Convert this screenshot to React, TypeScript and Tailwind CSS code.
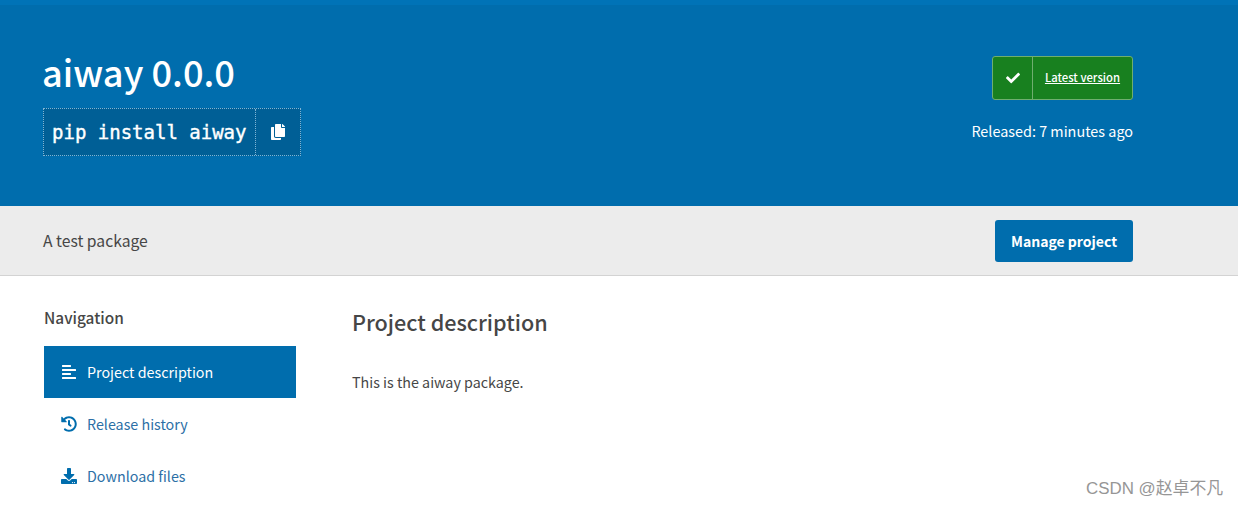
import React from "react";
import { FaAlignLeft, FaCheck, FaCopy, FaDownload, FaHistory } from "react-icons/fa";

const sans = "font-['Noto_Sans_CJK_SC','Source_Sans_Pro',sans-serif]";

const navItems = [
  { label: "Project description", icon: FaAlignLeft, active: true },
  { label: "Release history", icon: FaHistory, active: false },
  { label: "Download files", icon: FaDownload, active: false },
];

const App = () => {
  return (
    <div className={`relative w-[1238px] h-[507px] overflow-hidden bg-white text-[#464646] ${sans}`}>
      <header className="h-[206px] bg-[#006dad] border-t-[5px] border-[#0073b7] px-[43px] pt-[43px] text-white">
        <div className="flex justify-between w-[1090px]">
          <div>
            <h1 className="text-[36.2px] leading-[46px] font-medium -ml-[1px]">aiway 0.0.0</h1>
            <div className="mt-[14px] flex w-[258px] h-[48px] items-stretch border border-dotted border-[#7fb4d4] bg-[#005f96]">
              <span className="flex-1 flex items-center pl-[8px] font-['DejaVu_Sans_Mono',monospace] text-[19px] [-webkit-text-stroke:0.4px_white]">
                pip install aiway
              </span>
              <span className="w-[45px] flex items-center justify-center border-l border-dotted border-[#7fb4d4]">
                <FaCopy size={16} />
              </span>
            </div>
          </div>
          <div className="flex flex-col items-end pt-[8px]">
            <div className="flex w-[141px] h-[44px] rounded-[3px] border border-[#6fae6f] bg-[#18801f] items-stretch">
              <span className="w-[40px] flex items-center justify-center border-r border-[#6fae6f]">
                <FaCheck size={14} />
              </span>
              <a className="flex-1 flex items-center justify-center pb-[1px] text-[11.3px] font-medium underline">Latest version</a>
            </div>
            <p className="mt-[19px] text-[14.4px] leading-[24px]">Released: 7 minutes ago</p>
          </div>
        </div>
      </header>

      <div className="h-[70px] bg-[#ececec] border-b border-[#d3d3d3] px-[43px] flex items-center">
        <div className="flex justify-between items-center w-[1090px]">
          <p className="text-[15.7px]">A test package</p>
          <button className="w-[138px] h-[42px] pt-[1px] rounded-[3px] bg-[#006dad] text-white text-[14px] font-semibold">
            Manage project
          </button>
        </div>
      </div>

      <div className="flex pl-[44px] pt-[29px]">
        <nav className="w-[252px]">
          <h3 className="text-[15.4px] leading-[24px] font-medium">Navigation</h3>
          <ul className="mt-[17px]">
            {navItems.map((item) => {
              const Icon = item.icon;
              return (
                <li
                  key={item.label}
                  className={`h-[52px] flex items-center pl-[17px] gap-[10px] text-[14.3px] ${
                    item.active ? "bg-[#006dad] text-white" : "text-[#2c6fa6]"
                  }`}
                >
                  <Icon size={16} className={item.active ? "text-white" : "text-[#006dad]"} />
                  {item.label}
                </li>
              );
            })}
          </ul>
        </nav>
        <main className="ml-[56px]">
          <h2 className="text-[21.6px] leading-[36px] font-medium -mt-[1px]">Project description</h2>
          <p className="mt-[30px] text-[14.3px] leading-[24px]">This is the aiway package.</p>
        </main>
      </div>

      <span className="absolute left-[1086px] top-[478px] text-[16.9px] leading-[22px] text-[#969696] font-['Liberation_Sans','Noto_Sans_CJK_SC',sans-serif]">
        CSDN @赵卓不凡
      </span>
    </div>
  );
};

export default App;
